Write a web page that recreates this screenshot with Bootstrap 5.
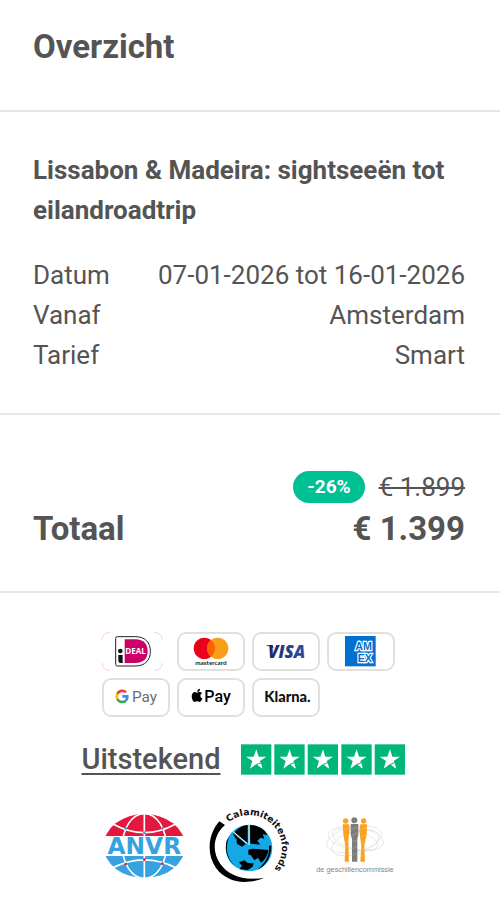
<!DOCTYPE html>
<html lang="nl">
<head>
<meta charset="utf-8">
<meta name="viewport" content="width=device-width, initial-scale=1">
<title>Overzicht</title>
<link href="https://cdn.jsdelivr.net/npm/bootstrap@5.3.0/dist/css/bootstrap.min.css" rel="stylesheet">
<style>
body { font-family: Roboto, "Liberation Sans", sans-serif; font-size: 26px; line-height: 40px; color: #545454; background: #fff; }
.block { padding: 38px 35px 38px 33px; border-bottom: 2px solid #e6e6e6; }
.block-head { padding-top: 27px; padding-bottom: 43px; }
.block-price { padding-top: 52px; padding-bottom: 42px; }
.heading { font-size: 33px; line-height: 40px; font-weight: 700; }
.price-total { margin-top: 2px; }
.trip-title { font-size: 26px; line-height: 40px; font-weight: 700; margin-bottom: 25px; }
.discount { background: #00bf93; font-size: 19px; line-height: 20px; font-weight: 700; padding: 6px 14px; }
.old-price { margin-left: 14px; }
.trust { padding: 39px 0 24px; }
.pay-methods { max-width: 296px; gap: 7px; }
.pay-tile { width: 68px; height: 39px; border: 2px solid #e0e0e0; border-radius: 9px; }
.pay-plain { border-color: transparent; }
.pay-tile svg { display: block; width: 68px; height: 39px; margin: -2px; overflow: visible; }
.rating { gap: 20px; margin-top: 22px; padding-right: 14px; }
.rating a { font-size: 29px; font-weight: 500; color: #545454; text-decoration-thickness: 2px; text-underline-offset: 4px; }
.marks { gap: 5px; margin-top: 20px; }
</style>
<script src="https://cdn.jsdelivr.net/npm/bootstrap@5.3.0/dist/js/bootstrap.bundle.min.js"></script>
</head>
<body>
<main>
  <header class="block block-head"><h1 class="heading mb-0">Overzicht</h1></header>

  <section class="block">
    <h2 class="trip-title">Lissabon &amp; Madeira: sightseeën tot eilandroadtrip</h2>
    <dl class="mb-0">
      <div class="d-flex justify-content-between"><dt class="fw-normal">Datum</dt><dd class="mb-0">07-01-2026 tot 16-01-2026</dd></div>
      <div class="d-flex justify-content-between"><dt class="fw-normal">Vanaf</dt><dd class="mb-0">Amsterdam</dd></div>
      <div class="d-flex justify-content-between"><dt class="fw-normal">Tarief</dt><dd class="mb-0">Smart</dd></div>
    </dl>
  </section>

  <section class="block block-price">
    <div class="d-flex justify-content-end align-items-center">
      <span class="discount rounded-pill text-white">-26%</span><s class="old-price">€ 1.899</s>
    </div>
    <div class="heading price-total d-flex justify-content-between"><span>Totaal</span><span>€ 1.399</span></div>
  </section>

  <footer class="trust">
    <div class="pay-methods d-flex flex-wrap mx-auto">
      <div class="pay-tile pay-plain">
        <svg viewBox="36 39 204 117" role="img" aria-label="iDEAL">
          <g fill="none" stroke="#f3b5ce" stroke-width="2"><path d="M36 62Q37 42 60 40M193 40Q215 42 217 62M36 132Q37 153 60 155M193 155Q215 153 217 132"/></g>
          <path d="M82 53H136C166 53 181 71 181 97S166 141 136 141H82Q77 141 77 136V58Q77 53 82 53Z" fill="#fff" stroke="#222" stroke-width="3"/>
          <path d="M104 61H136C162 61 173 76 173 97S162 132 136 132H104Z" fill="#cc0066"/>
          <circle cx="91" cy="96" r="7" fill="#111"/><path d="M85 108H98V132H92Q85 132 85 125Z" fill="#111"/>
          <text x="106" y="105" font-family="Open Sans, sans-serif" font-size="24" font-weight="700" fill="#fff">DEAL</text>
        </svg>
      </div>
      <div class="pay-tile">
        <svg viewBox="261 39 204 117" role="img" aria-label="Mastercard">
          <circle cx="343" cy="88" r="32" fill="#eb001b"/><circle cx="383" cy="88" r="32" fill="#f79e1b"/>
          <path d="M363 63A32 32 0 0 1 363 113A32 32 0 0 1 363 63Z" fill="#ff5f00"/>
          <text x="363" y="137" text-anchor="middle" font-family="Lato, sans-serif" font-size="19" font-weight="700" fill="#222">mastercard</text>
        </svg>
      </div>
      <div class="pay-tile">
        <svg viewBox="36 39 204 117" role="img" aria-label="Visa">
          <defs><linearGradient id="visa-blue"><stop offset="0" stop-color="#202460"/><stop offset="1" stop-color="#2b50a5"/></linearGradient></defs>
          <text x="84" y="116" font-family="Open Sans, sans-serif" font-size="51" font-weight="800" font-style="italic" fill="url(#visa-blue)">VISA</text>
          <path d="M79 79H98L101 88Q92 81 79 80Z" fill="#202460"/>
        </svg>
      </div>
      <div class="pay-tile">
        <svg viewBox="261 39 204 117" role="img" aria-label="American Express">
          <defs><clipPath id="amex-square"><path d="M315 51H407V142H315Z"/></clipPath></defs>
          <path d="M315 51H407V142H315Z" fill="#016fd0"/>
          <g clip-path="url(#amex-square)" font-family="Liberation Sans, sans-serif" font-weight="700" font-size="32" fill="#016fd0" stroke="#fff" stroke-width="7" paint-order="stroke" stroke-linejoin="miter">
            <text x="346" y="92">AM</text>
            <text x="353" y="129">EX</text>
          </g>
        </svg>
      </div>
      <div class="pay-tile">
        <svg viewBox="36 177 204 117" role="img" aria-label="Google Pay">
          <g fill="none" stroke-width="8">
            <path d="M108 220A16 16 0 0 0 82 225" stroke="#ea4335"/>
            <path d="M82 225A17 17 0 0 0 82 240" stroke="#fbbc04"/>
            <path d="M82 240A16 16 0 0 0 107 245" stroke="#34a853"/>
            <path d="M107 245Q113 240 112 232H97" stroke="#4285f4"/>
          </g>
          <text x="126" y="249" font-family="Roboto, sans-serif" font-size="46" fill="#6b6e72">Pay</text>
        </svg>
      </div>
      <div class="pay-tile">
        <svg viewBox="261 177 204 117" role="img" aria-label="Apple Pay">
          <path d="M322 219C321 212 326 209 330 209C330 215 327 219 322 219ZM321 221C325 221 326 218 331 219Q335 220 336 223C329 227 330 236 337 239C335 245 331 249 328 249C325 249 324 247 321 247S317 249 314 249C307 247 301 229 309 221C314 217 318 221 321 221Z" fill="#000"/>
          <text x="343" y="248" font-family="Roboto, sans-serif" font-size="48" font-weight="500" fill="#000">Pay</text>
        </svg>
      </div>
      <div class="pay-tile">
        <svg viewBox="36 177 204 117" role="img" aria-label="Klarna">
          <text x="73" y="249" font-family="Lato, sans-serif" font-size="44" font-weight="900" fill="#111">Klarna.</text>
        </svg>
      </div>
    </div>

    <div class="rating d-flex justify-content-center align-items-center">
      <a href="#beoordelingen">Uitstekend</a>
      <svg width="164" height="31" viewBox="513 33 492 91" role="img" aria-label="5 van 5 sterren">
        <defs><g id="star"><path d="M0 0H91V91H0Z" fill="#00b67a"/><path d="M46 15L53 37H76L57 50L64 73L46 59L27 73L34 50L15 37H38Z" fill="#fff"/><path d="M48 60L60 56L64 72Z" fill="#fff"/><path d="M47 60L59 56" stroke="#00b67a" stroke-width="3"/></g></defs>
        <use href="#star" x="513" y="33"/><use href="#star" x="613" y="33"/><use href="#star" x="713" y="33"/><use href="#star" x="814" y="33"/><use href="#star" x="914" y="33"/>
      </svg>
    </div>

    <div class="marks d-flex justify-content-center">
      <svg width="100" height="90" viewBox="0 -15 300 270" role="img" aria-label="ANVR">
        <defs><clipPath id="globe-top"><path d="M0 0H300V96H0Z"/></clipPath><clipPath id="globe-low"><path d="M0 156H300V240H0Z"/></clipPath></defs>
        <ellipse cx="148" cy="126" rx="122" ry="96" fill="#e4173e" clip-path="url(#globe-top)"/>
        <ellipse cx="148" cy="126" rx="122" ry="96" fill="#36a3e0" clip-path="url(#globe-low)"/>
        <g fill="none" stroke="#fff" stroke-width="5">
          <g clip-path="url(#globe-top)"><ellipse cx="148" cy="126" rx="66" ry="97"/><path d="M148 28V98M54 60Q148 112 242 60"/></g>
          <g clip-path="url(#globe-low)"><ellipse cx="148" cy="126" rx="66" ry="97"/><path d="M148 154V224M50 193Q148 142 246 193"/></g>
        </g>
        <g fill="#36a3e0"><circle cx="92" cy="73" r="4"/><circle cx="148" cy="86" r="4"/><circle cx="202" cy="73" r="4"/></g>
        <g fill="#e4173e"><circle cx="92" cy="180" r="4"/><circle cx="148" cy="167" r="4"/><circle cx="202" cy="179" r="4"/></g>
        <text x="148" y="151" text-anchor="middle" font-family="DejaVu Sans, sans-serif" font-size="70" font-weight="700" fill="#36a3e0">ANVR</text>
      </svg>
      <svg width="100" height="90" viewBox="0 0 300 270" role="img" aria-label="Calamiteitenfonds">
        <defs><path id="ring-text" d="M86 70A98 98 0 0 1 222 210L210 222"/></defs>
        <path d="M58 67L75 78C40 108 34 157 61 195C86 230 130 246 193 236C133 262 78 247 48 207C17 162 26 103 58 67Z" fill="#000"/>
        <circle cx="147" cy="147" r="70" fill="#14a8e4"/>
        <path d="M96 100C76 126 74 170 102 198C83 184 73 151 80 125Z" fill="#000"/>
        <path d="M107 96C118 84 132 79 143 78V132L114 112L107 119L99 105Z" fill="#000"/>
        <path d="M150 78C178 80 195 91 202 109L188 105L193 119L182 116L172 125L181 137L151 134Z" fill="#000"/>
        <path d="M109 116L119 113L139 134L126 143L111 134Z" fill="#000"/>
        <path d="M145 152L158 149L205 153C204 170 193 185 183 191L174 176L163 184L152 168L145 167Z" fill="#000"/>
        <path d="M117 190L133 184L143 192L161 193L158 203L143 213L119 210L126 200Z" fill="#000"/>
        <path d="M97 97L144 138L212 145" fill="none" stroke="#14a8e4" stroke-width="5"/>
        <path d="M147 76V138M96 95L142 134" fill="none" stroke="#fff" stroke-width="3"/>
        <path d="M214 140C214 178 195 202 171 213C199 190 209 168 207 140Z" fill="#000"/>
        <text font-family="DejaVu Sans, sans-serif" font-size="28" font-weight="700" fill="#111"><textPath href="#ring-text">Calamiteitenfonds</textPath></text>
      </svg>
      <svg width="100" height="90" viewBox="0 -15 300 270" role="img" aria-label="De Geschillencommissie">
        <g fill="none" stroke="#d4d4d4" stroke-width="1.5">
          <ellipse cx="148" cy="106" rx="84" ry="37" transform="rotate(-12 148 106)"/>
          <ellipse cx="153" cy="104" rx="84" ry="34" transform="rotate(9 153 104)"/>
          <ellipse cx="151" cy="116" rx="74" ry="34" transform="rotate(-18 151 116)"/>
          <ellipse cx="150" cy="107" rx="70" ry="28" transform="rotate(16 150 107)"/>
        </g>
        <g fill="#f9a21f"><circle cx="122" cy="51" r="8"/><path d="M113 61H132L134 76L130 108L132 173H119L121 126L115 91Z"/><circle cx="176" cy="51" r="8"/><path d="M166 61H186L185 91L178 126L180 173H166L169 126L163 82Z"/></g>
        <g fill="#7d7d7d"><circle cx="148" cy="49" r="9"/><path d="M137 60H160V92L157 105V173H141V105L137 92Z"/></g>
        <path d="M116 78L131 73M119 96L130 91M121 115L130 110M122 134L130 129M122 154L131 149M139 76L158 70M140 94L158 87M142 114L156 108M142 134L156 128M142 154L156 148M166 77L184 72M168 98L182 92M169 119L178 114M169 140L178 135" stroke="#fff" stroke-width="1" opacity=".6"/>
        <text x="150" y="204" text-anchor="middle" font-family="Liberation Sans, sans-serif" font-size="22" fill="#858585">de geschillencommissie</text>
      </svg>
    </div>
  </footer>
</main>
</body>
</html>
